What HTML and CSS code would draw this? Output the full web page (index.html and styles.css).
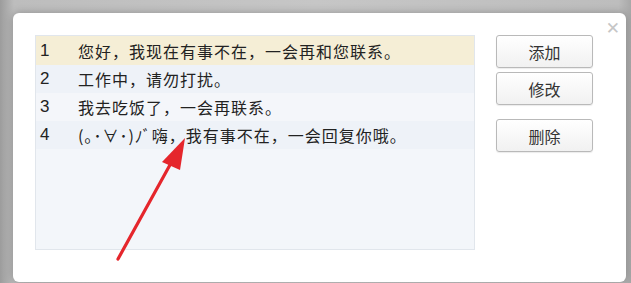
FILE: index.html
```html
<!DOCTYPE html>
<html>
  <head>
    <meta charset="UTF-8">
    <title>自动回复</title>
    <link rel="stylesheet" href="styles.css">
  </head>
  <body>
    <div class="dialog">
      <span class="close">&#x2715;</span>
      <div class="content">
        <ul class="reply-list">
          <li class="row selected"><span class="num">1</span><span class="text">您好，我现在有事不在，一会再和您联系。</span></li>
          <li class="row"><span class="num">2</span><span class="text">工作中，请勿打扰。</span></li>
          <li class="row alt"><span class="num">3</span><span class="text">我去吃饭了，一会再联系。</span></li>
          <li class="row"><span class="num">4</span><span class="text">(｡･∀･)ﾉﾞ嗨，我有事不在，一会回复你哦。</span></li>
        </ul>
        <div class="actions">
          <button class="btn">添加</button>
          <button class="btn">修改</button>
          <button class="btn spaced">删除</button>
        </div>
      </div>
      <!-- annotation arrow -->
      <svg class="arrow" width="120" height="140" viewBox="0 0 120 140">
        <line x1="12" y1="127" x2="70" y2="22" stroke="#e5262c" stroke-width="3.2" stroke-linecap="round"/>
        <polygon points="79,6 56,30 74,38" fill="#e5262c"/>
      </svg>
    </div>
  </body>
</html>
```

FILE: styles.css
```css
body {
  margin: 0;
  padding: 13px 5px 0 13px;
  height: 283px;
  box-sizing: border-box;
  overflow: hidden;
  background: linear-gradient(90deg, #9c9c9c 0, #bdbdbd 14px, #c6c6c6 50%, #bdbdbd 98%, #a8a8a8 100%);
  font-family: "Microsoft YaHei", "Noto Sans CJK SC", sans-serif;
}
.dialog {
  position: relative;
  height: 269px;
  background-color: #fff;
  border-radius: 6px;
  box-shadow: 0 0 8px rgba(0, 0, 0, 0.25);
  padding: 22px 0 0 22px;
  box-sizing: border-box;
}
.close {
  position: absolute;
  top: 5px;
  right: 6px;
  font-size: 17px;
  color: #c6c6c6;
  font-family: "DejaVu Sans", sans-serif;
}
.content {
  display: flex;
  gap: 21px;
}
.reply-list {
  list-style: none;
  margin: 0;
  padding: 0;
  width: 440px;
  height: 215px;
  box-sizing: border-box;
  background-color: #f3f6fa;
  border: 1px solid #e1e6ec;
}
.row {
  display: flex;
  align-items: center;
  height: 28px;
  font-size: 16px;
  color: #222;
  background-color: #eef2f8;
}
.row.alt {
  background-color: #f4f6fa;
}
.row.selected {
  height: 29px;
  background-color: #f5eed6;
}
.num {
  width: 42px;
  padding-left: 4px;
  box-sizing: border-box;
  font-size: 17px;
  font-family: "Liberation Sans", Arial, sans-serif;
}
.text {
  letter-spacing: 1px;
}
.actions {
  display: flex;
  flex-direction: column;
  gap: 4px;
  width: 97px;
}
.btn {
  height: 33px;
  border: 1px solid #b9b9b9;
  border-radius: 3px;
  background: linear-gradient(#ffffff, #f1f1f1);
  font-family: "Microsoft YaHei", "Noto Sans CJK SC", sans-serif;
  font-size: 16px;
  color: #333;
  box-shadow: 0 1px 1px rgba(0, 0, 0, 0.08);
}
.btn.spaced {
  margin-top: 10px;
}
.arrow {
  position: absolute;
  left: 93px;
  top: 119px;
}
```
